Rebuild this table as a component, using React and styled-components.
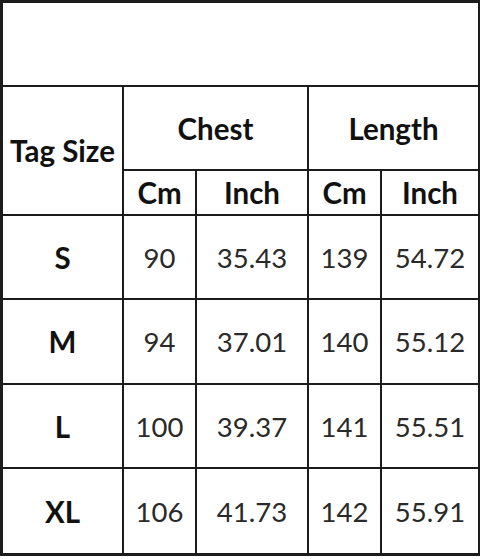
import React from "react";
import styled, { createGlobalStyle } from "styled-components";

const GlobalStyle = createGlobalStyle`
  html, body {
    margin: 0;
    padding: 0;
    background: #ffffff;
  }
  body {
    font-family: Lato, "Noto Sans", sans-serif;
  }
`;

const rows = [
  { tag: "S", chestCm: "90", chestIn: "35.43", lenCm: "139", lenIn: "54.72" },
  { tag: "M", chestCm: "94", chestIn: "37.01", lenCm: "140", lenIn: "55.12" },
  { tag: "L", chestCm: "100", chestIn: "39.37", lenCm: "141", lenIn: "55.51" },
  { tag: "XL", chestCm: "106", chestIn: "41.73", lenCm: "142", lenIn: "55.91" },
];

export default function App() {
  return (
    <Page>
      <GlobalStyle />
      <Sheet>
        <Cell $span={5} />
        <Cell $bold $rows={2}>Tag Size</Cell>
        <Cell $bold $span={2}>Chest</Cell>
        <Cell $bold $span={2}>Length</Cell>
        <Cell $bold>Cm</Cell>
        <Cell $bold>Inch</Cell>
        <Cell $bold>Cm</Cell>
        <Cell $bold>Inch</Cell>
        {rows.map((r) => (
          <React.Fragment key={r.tag}>
            <Cell $bold>{r.tag}</Cell>
            <Cell>{r.chestCm}</Cell>
            <Cell>{r.chestIn}</Cell>
            <Cell>{r.lenCm}</Cell>
            <Cell>{r.lenIn}</Cell>
          </React.Fragment>
        ))}
      </Sheet>
    </Page>
  );
}

const Page = styled.div`
  width: 480px;
  height: 559px;
  background: #fff;
`;

const Sheet = styled.div`
  display: grid;
  grid-template-columns: 119px 71px 110px 71px 96px;
  grid-template-rows: 82px 82px 43px 82px 83px 82px 84px;
  gap: 2px;
  padding: 3px 2px 3px 3px;
  background: #1c1c1c;
`;

const Cell = styled.div`
  grid-column: ${(p) => (p.$span ? `span ${p.$span}` : "auto")};
  grid-row: ${(p) => (p.$rows ? `span ${p.$rows}` : "auto")};
  background: #fff;
  display: flex;
  align-items: center;
  justify-content: center;
  font-family: Lato, "Noto Sans", sans-serif;
  font-size: ${(p) => (p.$bold ? "29.5px" : "27.5px")};
  font-weight: ${(p) => (p.$bold ? 700 : 400)};
  color: ${(p) => (p.$bold ? "#111" : "#2a2a2a")};
  white-space: nowrap;
`;
